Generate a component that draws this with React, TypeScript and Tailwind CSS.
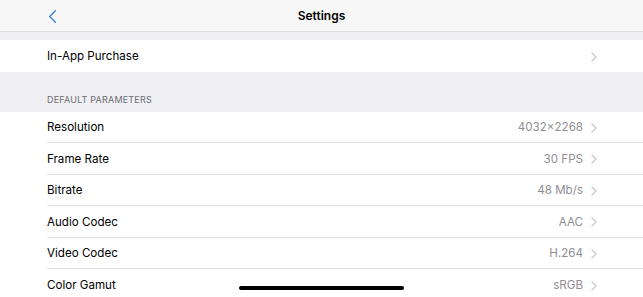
import { ChevronLeft } from "lucide-react";

const params = [
  { label: "Resolution", value: "4032×2268" },
  { label: "Frame Rate", value: "30 FPS" },
  { label: "Bitrate", value: "48 Mb/s" },
  { label: "Audio Codec", value: "AAC" },
  { label: "Video Codec", value: "H.264" },
  { label: "Color Gamut", value: "sRGB" },
];

function Chevron() {
  return (
    <svg width="6" height="10" viewBox="0 0 6 10" className="ml-[8px] shrink-0">
      <path d="M1 1l4 4-4 4" fill="none" stroke="#c7c7cc" strokeWidth="1.2" strokeLinecap="round" strokeLinejoin="round" />
    </svg>
  );
}

function Row({ label, value, last }: { label: string; value?: string; last?: boolean }) {
  return (
    <div className="flex h-[31.5px] items-center bg-white pl-[47px]">
      <div className={`flex h-full flex-1 items-center pr-[46px] pt-[2px] ${last ? "" : "border-b border-[#e0e0e4]"}`}>
        <span className="flex-1 text-[11.6px] text-black">{label}</span>
        {value && <span className="text-[11.6px] text-[#8e8e93]">{value}</span>}
        <Chevron />
      </div>
    </div>
  );
}

export default function App() {
  return (
    <main
      className="relative h-[297px] w-[643px] overflow-hidden bg-[#efeff4]"
      style={{ fontFamily: "Inter, 'Liberation Sans', sans-serif" }}
    >
      <header className="relative flex h-[32px] items-center justify-center border-b border-[#dcdce0] bg-[#f7f7f7]">
        <ChevronLeft className="absolute left-[41px] top-[5px] h-[23px] w-[23px] text-[#3b82d9]" strokeWidth={1.4} />
        <h1 className="pt-[1px] text-[12px] font-semibold text-black">Settings</h1>
      </header>

      <div className="mt-[8px]">
        <Row label="In-App Purchase" last />
      </div>

      <div className="flex h-[40px] items-end pb-[5px] pl-[47px]">
        <span className="text-[9px] uppercase tracking-[0.2px] text-[#6d6d72]">Default Parameters</span>
      </div>

      <div>
        {params.map((p, i) => (
          <Row key={p.label} label={p.label} value={p.value} last={i === params.length - 1} />
        ))}
      </div>

      <div className="absolute left-[239px] top-[286px] h-[4px] w-[165px] rounded-full bg-black" />
    </main>
  );
}
